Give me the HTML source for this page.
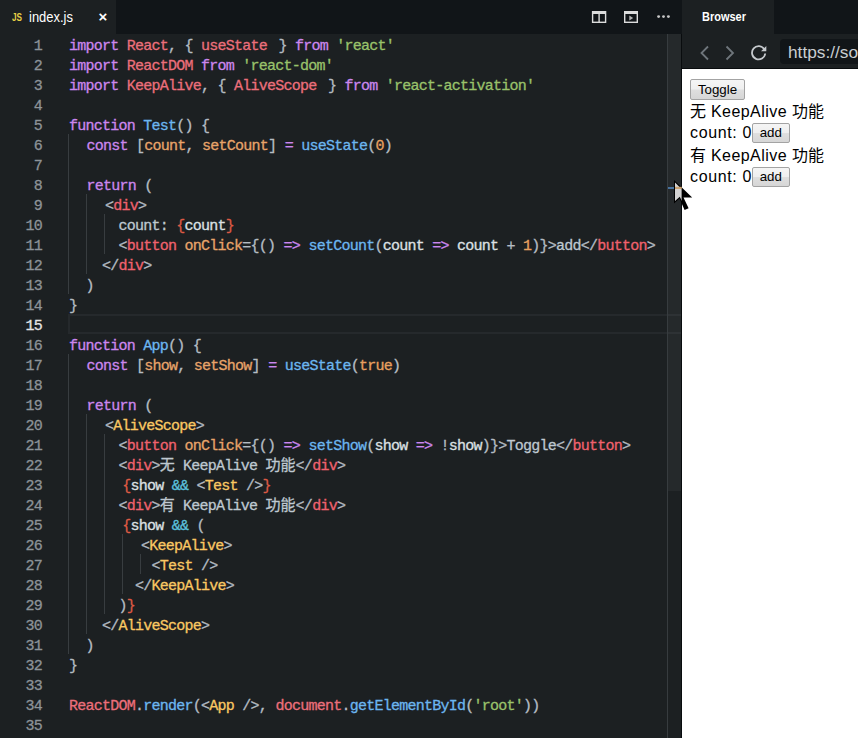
<!DOCTYPE html>
<html><head><meta charset="utf-8"><title>index.js</title>
<style>
html,body{margin:0;padding:0}
body{width:858px;height:738px;overflow:hidden;background:#1c2022;position:relative;font-family:"Liberation Sans","Noto Sans CJK SC",sans-serif}
.abs{position:absolute}
#tabs{left:0;top:0;width:682px;height:34px;background:#111518}
#tab{left:0;top:0;width:116px;height:34px;background:#1c2022}
#tabname{left:29px;top:.5px;line-height:33px;font-size:14px;color:#fff;transform:scaleX(.925);transform-origin:0 0}
#js{left:12px;top:0;line-height:35px;font-size:10.5px;font-weight:bold;color:#e6cf45;transform:scaleX(.78);transform-origin:0 0}
#close{left:97px;top:0;width:12px;line-height:33px;font-size:15px;font-weight:bold;color:#fff;text-align:center}
#editor{left:0;top:34px;width:668px;height:704px;background:#1c2022}
.ln,.cl{position:absolute;height:20px;line-height:20px;font-family:"Liberation Mono","Noto Sans CJK SC",monospace;font-size:15px;letter-spacing:-.75px;white-space:pre;-webkit-text-stroke:.3px}
.ln{left:0;width:42px;text-align:right;color:#8d9398}
.ln.cur{color:#e6e6e6}
.cl{color:#dde1e4}.x,.z{color:#bfc8d0}
.m3{margin-left:3px}.k{color:#cc87ef}.r{color:#ec6f7b}.s{color:#99c26b}.f{color:#6cb6f0}.p{color:#b4bcc3}.o{color:#e8a46a}.n{color:#e8a060}
.t{color:#f0626e}.c{color:#fac863}.a{color:#e8a46a}.j{color:#de5a45}.w{color:#5bc0de}
.z{font-family:"Noto Sans CJK SC",sans-serif;letter-spacing:0;font-size:15px;line-height:0}
.g{position:absolute;width:1px;background:#383d40}
#curline{left:68px;top:314px;width:620px;height:16px;border:2px solid #25292c}
#sb{left:667px;top:34px;width:15px;height:704px;background:transparent;border-left:1px solid #373c3f;box-sizing:border-box}
#slider{left:668px;top:34px;width:14px;height:457px;background:rgba(255,255,255,.042)}
#mark{left:668px;top:187px;width:7px;height:2px;background:#47729f}
#right{left:682px;top:0;width:176px;height:738px;background:#fff}
#rhead{left:682px;top:0;width:176px;height:34px;background:#111518}
#rtab{left:682px;top:0;width:92px;height:34px;background:#1c2022}
#rtabname{left:702px;top:1px;line-height:33px;font-size:12.5px;font-weight:bold;color:#fff;transform:scaleX(.88);transform-origin:0 0}
#nav{left:682px;top:34px;width:176px;height:34px;background:#1c2022}
#url{left:780px;top:39px;width:78px;height:25px;background:#111518;border-radius:4px 0 0 4px;color:#c9cdd1;font-size:17.3px;line-height:26px;padding-left:8px;box-sizing:border-box;white-space:nowrap;overflow:hidden}
#page{left:690px;top:79px;width:168px;color:#000;font-size:16px;line-height:22px}
.cj{position:relative;top:.5px}.la{letter-spacing:.45px}.lb{letter-spacing:.64px}
.btn{display:inline-block;box-sizing:border-box;background:linear-gradient(#f5f5f5 0%,#efefef 48%,#dfdfdf 52%,#d6d6d6 100%);border:1px solid #a3a3a3;border-radius:2px;font-size:13.3px;color:#000;text-align:center;vertical-align:top}
</style></head><body>
<div id="tabs" class="abs"></div>
<div id="tab" class="abs"></div>
<div id="js" class="abs">JS</div>
<div id="tabname" class="abs">index.js</div>
<div id="close" class="abs">×</div>
<svg class="abs" style="left:590px;top:8px" width="90" height="18" viewBox="0 0 90 18">
 <g fill="none" stroke="#dcdcdc" stroke-width="1.4">
  <rect x="2.6" y="3.7" width="13" height="10.6"/><line x1="9.1" y1="3.7" x2="9.1" y2="14.3"/><line x1="2.6" y1="5" x2="15.6" y2="5" stroke-width="2"/>
  <rect x="34.7" y="3.7" width="12.6" height="10.6"/><line x1="34.7" y1="5" x2="47.3" y2="5" stroke-width="2"/>
 </g>
 <path d="M39.3 7.6 L43.2 10 L39.3 12.4Z" fill="#b4b4b4"/>
 <circle cx="68.6" cy="8.6" r="1.45" fill="#c6c6c6"/><circle cx="73.5" cy="8.6" r="1.45" fill="#c6c6c6"/><circle cx="78.4" cy="8.6" r="1.45" fill="#c6c6c6"/>
</svg>
<div id="editor" class="abs"></div>
<div id="curline" class="abs"></div>
<div class="g" style="left:68px;top:134px;height:160px"></div>
<div class="g" style="left:86px;top:194px;height:80px"></div>
<div class="g" style="left:104px;top:214px;height:40px"></div>
<div class="g" style="left:68px;top:354px;height:300px"></div>
<div class="g" style="left:86px;top:414px;height:220px"></div>
<div class="g" style="left:104px;top:434px;height:180px"></div>
<div class="g" style="left:122px;top:534px;height:60px"></div>
<div class="g" style="left:140px;top:554px;height:20px"></div>
<div class="ln" style="top:37px">1</div>
<div class="cl" style="top:37px;left:69px"><span class="k">import</span> <span class="r">React</span><span class="p">,</span> <span class="p">{</span> <span class="r">useState</span> <span class="p m3">}</span> <span class="k">from</span> <span class="s">'react'</span></div>
<div class="ln" style="top:57px">2</div>
<div class="cl" style="top:57px;left:69px"><span class="k">import</span> <span class="r">ReactDOM</span> <span class="k">from</span> <span class="s">'react-dom'</span></div>
<div class="ln" style="top:77px">3</div>
<div class="cl" style="top:77px;left:69px"><span class="k">import</span> <span class="r">KeepAlive</span><span class="p">,</span> <span class="p">{</span> <span class="r">AliveScope</span> <span class="p m3">}</span> <span class="k">from</span> <span class="s">'react-activation'</span></div>
<div class="ln" style="top:97px">4</div>
<div class="ln" style="top:117px">5</div>
<div class="cl" style="top:117px;left:69px"><span class="k">function</span> <span class="f">Test</span><span class="p">()</span> <span class="p">{</span></div>
<div class="ln" style="top:137px">6</div>
<div class="cl" style="top:137px;left:86.5px"><span class="k">const</span> <span class="p">[</span><span class="o">count</span><span class="p">,</span> <span class="o">setCount</span><span class="p">]</span> <span class="k">=</span> <span class="f">useState</span><span class="p">(</span><span class="n">0</span><span class="p">)</span></div>
<div class="ln" style="top:157px">7</div>
<div class="ln" style="top:177px">8</div>
<div class="cl" style="top:177px;left:86.5px"><span class="k">return</span> <span class="p">(</span></div>
<div class="ln" style="top:197px">9</div>
<div class="cl" style="top:197px;left:105px"><span class="p">&lt;</span><span class="t">div</span><span class="p">&gt;</span></div>
<div class="ln" style="top:217px">10</div>
<div class="cl" style="top:217px;left:118.5px"><span class="x">count: </span><span class="j">{</span>count<span class="j">}</span></div>
<div class="ln" style="top:237px">11</div>
<div class="cl" style="top:237px;left:118.5px"><span class="p">&lt;</span><span class="t">button</span> <span class="a">onClick</span><span class="p">=</span><span class="p">{()</span> <span class="k">=&gt;</span> <span class="f">setCount</span><span class="p">(</span>count <span class="k">=&gt;</span> count <span class="p">+</span> <span class="n">1</span><span class="p">)}&gt;</span><span class="x">add</span><span class="p">&lt;/</span><span class="t">button</span><span class="p">&gt;</span></div>
<div class="ln" style="top:257px">12</div>
<div class="cl" style="top:257px;left:102px"><span class="p">&lt;/</span><span class="t">div</span><span class="p">&gt;</span></div>
<div class="ln" style="top:277px">13</div>
<div class="cl" style="top:277px;left:85.5px"><span class="p">)</span></div>
<div class="ln" style="top:297px">14</div>
<div class="cl" style="top:297px;left:69px"><span class="p">}</span></div>
<div class="ln cur" style="top:317px">15</div>
<div class="ln" style="top:337px">16</div>
<div class="cl" style="top:337px;left:69px"><span class="k">function</span> <span class="f">App</span><span class="p">()</span> <span class="p">{</span></div>
<div class="ln" style="top:357px">17</div>
<div class="cl" style="top:357px;left:86.5px"><span class="k">const</span> <span class="p">[</span><span class="o">show</span><span class="p">,</span> <span class="o">setShow</span><span class="p">]</span> <span class="k">=</span> <span class="f">useState</span><span class="p">(</span><span class="n">true</span><span class="p">)</span></div>
<div class="ln" style="top:377px">18</div>
<div class="ln" style="top:397px">19</div>
<div class="cl" style="top:397px;left:86.5px"><span class="k">return</span> <span class="p">(</span></div>
<div class="ln" style="top:417px">20</div>
<div class="cl" style="top:417px;left:105px"><span class="p">&lt;</span><span class="c">AliveScope</span><span class="p">&gt;</span></div>
<div class="ln" style="top:437px">21</div>
<div class="cl" style="top:437px;left:118.5px"><span class="p">&lt;</span><span class="t">button</span> <span class="a">onClick</span><span class="p">=</span><span class="p">{()</span> <span class="k">=&gt;</span> <span class="f">setShow</span><span class="p">(</span>show <span class="k">=&gt;</span> <span class="p">!</span>show<span class="p">)}&gt;</span><span class="x">Toggle</span><span class="p">&lt;/</span><span class="t">button</span><span class="p">&gt;</span></div>
<div class="ln" style="top:457px">22</div>
<div class="cl" style="top:457px;left:118.5px"><span class="p">&lt;</span><span class="t">div</span><span class="p">&gt;</span><span class="z">无</span><span class="x"> KeepAlive </span><span class="z">功能</span><span class="p">&lt;/</span><span class="t">div</span><span class="p">&gt;</span></div>
<div class="ln" style="top:477px">23</div>
<div class="cl" style="top:477px;left:122.2px"><span class="j">{</span>show <span class="w">&amp;&amp;</span> <span class="p">&lt;</span><span class="c">Test</span> <span class="p">/&gt;</span><span class="j">}</span></div>
<div class="ln" style="top:497px">24</div>
<div class="cl" style="top:497px;left:118.5px"><span class="p">&lt;</span><span class="t">div</span><span class="p">&gt;</span><span class="z">有</span><span class="x"> KeepAlive </span><span class="z">功能</span><span class="p">&lt;/</span><span class="t">div</span><span class="p">&gt;</span></div>
<div class="ln" style="top:517px">25</div>
<div class="cl" style="top:517px;left:122.2px"><span class="j">{</span>show <span class="w">&amp;&amp;</span> <span class="p">(</span></div>
<div class="ln" style="top:537px">26</div>
<div class="cl" style="top:537px;left:141px"><span class="p">&lt;</span><span class="c">KeepAlive</span><span class="p">&gt;</span></div>
<div class="ln" style="top:557px">27</div>
<div class="cl" style="top:557px;left:151.5px"><span class="p">&lt;</span><span class="c">Test</span> <span class="p">/&gt;</span></div>
<div class="ln" style="top:577px">28</div>
<div class="cl" style="top:577px;left:135px"><span class="p">&lt;/</span><span class="c">KeepAlive</span><span class="p">&gt;</span></div>
<div class="ln" style="top:597px">29</div>
<div class="cl" style="top:597px;left:118.5px"><span class="p">)</span><span class="j">}</span></div>
<div class="ln" style="top:617px">30</div>
<div class="cl" style="top:617px;left:102px"><span class="p">&lt;/</span><span class="c">AliveScope</span><span class="p">&gt;</span></div>
<div class="ln" style="top:637px">31</div>
<div class="cl" style="top:637px;left:85.5px"><span class="p">)</span></div>
<div class="ln" style="top:657px">32</div>
<div class="cl" style="top:657px;left:69px"><span class="p">}</span></div>
<div class="ln" style="top:677px">33</div>
<div class="ln" style="top:697px">34</div>
<div class="cl" style="top:697px;left:69px"><span class="r">ReactDOM</span><span class="p">.</span><span class="f">render</span><span class="p">(&lt;</span><span class="c">App</span> <span class="p">/&gt;,</span> <span class="r">document</span><span class="p">.</span><span class="f">getElementById</span><span class="p">(</span><span class="s">'root'</span><span class="p">))</span></div>
<div class="ln" style="top:717px">35</div>
<div id="sb" class="abs"></div>
<div id="slider" class="abs"></div>
<div id="mark" class="abs"></div>
<div id="right" class="abs"></div>
<div id="rhead" class="abs"></div>
<div id="rtab" class="abs"></div>
<div id="rtabname" class="abs">Browser</div>
<div id="nav" class="abs"></div>
<div class="abs" style="left:681px;top:34px;width:1px;height:704px;background:#090c0e"></div>
<div class="abs" style="left:681px;top:68px;width:177px;height:1px;background:#090c0e"></div>
<svg class="abs" style="left:694px;top:40.5px" width="80" height="24" viewBox="0 0 80 24">
 <g fill="none" stroke="#6f767c" stroke-width="1.8">
  <path d="M14 5.5 L7.5 12 L14 18.5"/><path d="M32.5 5.5 L39 12 L32.5 18.5"/>
 </g>
 <g fill="none" stroke="#c6cace" stroke-width="1.8">
  <path d="M70.3 8.4 A6.6 6.6 0 1 0 71.2 12.5"/>
 </g>
 <path d="M72.3 5 L72.3 10.2 L67 10.2Z" fill="#c6cace"/>
</svg>
<div id="url" class="abs">https://so</div>
<div id="page" class="abs">
<div style="height:21px"><span class="btn" style="width:55px;height:21px;line-height:19px">Toggle</span></div>
<div class="cj">无<span class="la"> KeepAlive </span>功能</div>
<div><span class="lb">count: 0</span><span class="btn" style="width:37.5px;height:20px;line-height:18px;margin-top:1px">add</span></div>
<div class="cj">有<span class="la"> KeepAlive </span>功能</div>
<div><span class="lb">count: 0</span><span class="btn" style="width:37.5px;height:20px;line-height:18px;margin-top:1px">add</span></div>
</div>
<svg class="abs" style="left:670px;top:176px" width="28" height="40" viewBox="0 0 28 40">
 <defs><clipPath id="cl"><rect x="0" y="0" width="11.8" height="40"/></clipPath></defs>
 <path id="arrow" d="M4 4 L4 27.5 L9.5 22.5 L14.6 33.9 L18.6 32.2 L13.5 21.6 L22.2 21.6Z" fill="#000"/>
 <path d="M5 6.5 L5 25 L9.8 20.8 L11.8 25 L11.8 13.3Z" fill="#d2d2d2" clip-path="url(#cl)"/>
 <rect x="5" y="10.8" width="6.8" height="2.2" fill="#c8a070"/>
</svg>
</body></html>
